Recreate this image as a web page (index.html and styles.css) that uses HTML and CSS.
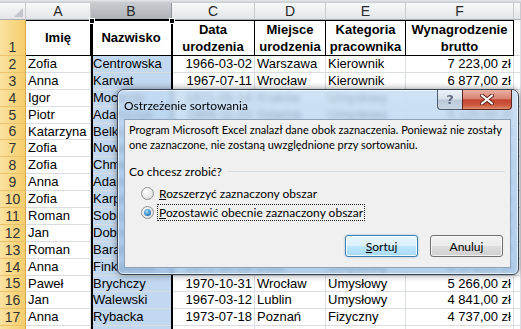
FILE: index.html
```html
<!DOCTYPE html>
<html lang="pl">
<head>
<meta charset="utf-8">
<title>Ostrzeżenie sortowania</title>
<link rel="stylesheet" href="styles.css">
</head>
<body>
<div class="screen">
  <div class="topstrip"></div>
  <div class="sheet">
    <div class="corner"><span class="tri"></span></div>
    <div class="colh">A</div><div class="colh sel">B</div><div class="colh">C</div><div class="colh">D</div><div class="colh">E</div><div class="colh">F</div><div class="colh"></div>

    <div class="rowh">1</div>
    <div class="c h1">Imię</div><div class="c h1 act">Nazwisko</div><div class="c h1">Data<br>urodzenia</div><div class="c h1">Miejsce<br>urodzenia</div><div class="c h1">Kategoria<br>pracownika</div><div class="c h1">Wynagrodzenie<br>brutto</div><div class="c"></div>

    <div class="rowh">2</div><div class="c">Zofia</div><div class="c b">Centrowska</div><div class="c r">1966-03-02</div><div class="c">Warszawa</div><div class="c">Kierownik</div><div class="c r">7 223,00 zł</div><div class="c"></div>
    <div class="rowh">3</div><div class="c">Anna</div><div class="c b">Karwat</div><div class="c r">1967-07-11</div><div class="c">Wrocław</div><div class="c">Kierownik</div><div class="c r">6 877,00 zł</div><div class="c"></div>
    <div class="rowh">4</div><div class="c">Igor</div><div class="c b">Mocarski</div><div class="c r">1971-05-14</div><div class="c">Kraków</div><div class="c">Umysłowy</div><div class="c r">5 412,00 zł</div><div class="c"></div>
    <div class="rowh">5</div><div class="c">Piotr</div><div class="c b">Adamczyk</div><div class="c r">1969-11-23</div><div class="c">Gdańsk</div><div class="c">Umysłowy</div><div class="c r">5 120,00 zł</div><div class="c"></div>
    <div class="rowh">6</div><div class="c">Katarzyna</div><div class="c b">Belkowska</div><div class="c r">1975-02-08</div><div class="c">Warszawa</div><div class="c">Umysłowy</div><div class="c r">4 980,00 zł</div><div class="c"></div>
    <div class="rowh">7</div><div class="c">Zofia</div><div class="c b">Nowak</div><div class="c r">1968-09-30</div><div class="c">Łódź</div><div class="c">Fizyczny</div><div class="c r">4 310,00 zł</div><div class="c"></div>
    <div class="rowh">8</div><div class="c">Zofia</div><div class="c b">Chmielewska</div><div class="c r">1972-04-17</div><div class="c">Poznań</div><div class="c">Umysłowy</div><div class="c r">4 655,00 zł</div><div class="c"></div>
    <div class="rowh">9</div><div class="c">Anna</div><div class="c b">Adamska</div><div class="c r">1970-12-01</div><div class="c">Wrocław</div><div class="c">Fizyczny</div><div class="c r">4 220,00 zł</div><div class="c"></div>
    <div class="rowh">10</div><div class="c">Zofia</div><div class="c b">Karpińska</div><div class="c r">1966-06-25</div><div class="c">Lublin</div><div class="c">Umysłowy</div><div class="c r">5 030,00 zł</div><div class="c"></div>
    <div class="rowh">11</div><div class="c">Roman</div><div class="c b">Sobczak</div><div class="c r">1964-08-19</div><div class="c">Kraków</div><div class="c">Fizyczny</div><div class="c r">4 105,00 zł</div><div class="c"></div>
    <div class="rowh">12</div><div class="c">Jan</div><div class="c b">Dobrowolski</div><div class="c r">1973-01-11</div><div class="c">Gdańsk</div><div class="c">Umysłowy</div><div class="c r">4 890,00 zł</div><div class="c"></div>
    <div class="rowh">13</div><div class="c">Roman</div><div class="c b">Barański</div><div class="c r">1969-03-05</div><div class="c">Warszawa</div><div class="c">Fizyczny</div><div class="c r">4 460,00 zł</div><div class="c"></div>
    <div class="rowh">14</div><div class="c">Anna</div><div class="c b">Finkowska</div><div class="c r">1971-10-28</div><div class="c">Łódź</div><div class="c">Umysłowy</div><div class="c r">4 575,00 zł</div><div class="c"></div>
    <div class="rowh">15</div><div class="c">Paweł</div><div class="c b">Brychczy</div><div class="c r">1970-10-31</div><div class="c">Wrocław</div><div class="c">Umysłowy</div><div class="c r">5 266,00 zł</div><div class="c"></div>
    <div class="rowh">16</div><div class="c">Jan</div><div class="c b">Walewski</div><div class="c r">1967-03-12</div><div class="c">Lublin</div><div class="c">Umysłowy</div><div class="c r">4 841,00 zł</div><div class="c"></div>
    <div class="rowh">17</div><div class="c">Anna</div><div class="c b">Rybacka</div><div class="c r">1973-07-18</div><div class="c">Poznań</div><div class="c">Fizyczny</div><div class="c r">4 737,00 zł</div><div class="c"></div>
    <div class="rowh">18</div><div class="c"></div><div class="c b"></div><div class="c"></div><div class="c"></div><div class="c"></div><div class="c"></div><div class="c"></div>
  </div>

  <div class="selection"></div>

  <div class="dialog">
    <div class="titlebar">
      <span class="title">Ostrzeżenie sortowania</span>
      <div class="ctrls">
        <span class="help">?</span>
        <span class="close">
          <svg width="14" height="11" viewBox="0 0 14 11"><path d="M2 1.5 L12 9.5 M12 1.5 L2 9.5" stroke="#5a2018" stroke-width="4" stroke-linecap="round"/><path d="M2 1.5 L12 9.5 M12 1.5 L2 9.5" stroke="#fff" stroke-width="2.2" stroke-linecap="round"/></svg>
        </span>
      </div>
    </div>
    <div class="client">
      <p class="msg">Program Microsoft Excel znalazł dane obok zaznaczenia. Ponieważ nie zostały<br>one zaznaczone, nie zostaną uwzględnione przy sortowaniu.</p>
      <div class="question">Co chcesz zrobić?</div>
      <div class="opt first"><span class="radio"></span><span class="lbl"><u>R</u>ozszerzyć zaznaczony obszar</span></div>
      <div class="opt"><span class="radio on"></span><span class="lbl focus"><u>P</u>ozostawić obecnie zaznaczony obszar</span></div>
      <div class="buttons">
        <span class="btn default"><u>S</u>ortuj</span>
        <span class="btn">Anuluj</span>
      </div>
    </div>
  </div>
</div>
</body>
</html>
```
FILE: styles.css
```css
html, body {
  margin: 0;
  padding: 0;
  background: #fff;
}
body {
  width: 521px;
  height: 329px;
  overflow: hidden;
  font-family: "Liberation Sans", Arial, sans-serif;
}
.screen {
  position: relative;
  width: 521px;
  height: 329px;
  overflow: hidden;
}
.topstrip {
  height: 3px;
  background: linear-gradient(#e6e8eb, #c3c8ce);
}
.sheet {
  display: grid;
  grid-template-columns: 26px 65px 81px 83px 71px 80px 108px 7px;
  grid-template-rows: 17px 36px;
  grid-auto-rows: 16.9px;
}
.corner, .colh {
  box-sizing: border-box;
  background: linear-gradient(#f8f9fa, #e2e4e7);
  border-right: 1px solid #c6c9ce;
  border-bottom: 1px solid #a9adb3;
}
.corner {
  position: relative;
}
.corner .tri {
  position: absolute;
  right: 2px;
  bottom: 2px;
  width: 0;
  height: 0;
  border-left: 9px solid transparent;
  border-bottom: 9px solid #c2c5c9;
}
.colh {
  display: flex;
  align-items: center;
  justify-content: center;
  font-size: 14px;
  color: #2a2a2a;
}
.colh.sel {
  background: linear-gradient(#c8cbcf, #aeb2b7);
  border-right-color: #8e9298;
}
.rowh {
  box-sizing: border-box;
  display: flex;
  align-items: flex-end;
  justify-content: center;
  font-size: 14px;
  line-height: 16px;
  color: #333;
  background: linear-gradient(90deg, #fae2a0, #f5cd6c);
  border-right: 1px solid #d6a64a;
  border-bottom: 1px solid #e9c26a;
}
.c {
  box-sizing: border-box;
  display: flex;
  align-items: center;
  padding: 0 2px;
  font-size: 13px;
  line-height: 16px;
  white-space: nowrap;
  overflow: hidden;
  color: #000;
  border-right: 1px solid #d9dce1;
  border-bottom: 1px solid #d9dce1;
}
.c.r {
  justify-content: flex-end;
}
.c.b {
  background: #c2d8f0;
}
.c.h1 {
  justify-content: center;
  text-align: center;
  font-weight: bold;
  line-height: 17px;
  border-right-color: #000;
  border-bottom-color: #000;
  box-shadow: inset 0 1px 0 #000;
  padding: 0 1px;
}
.selection {
  position: absolute;
  left: 91px;
  top: 19px;
  width: 82px;
  height: 320px;
  box-sizing: border-box;
  border: 2px solid #000;
  border-bottom: none;
}
.selection::before, .selection::after {
  content: "";
  position: absolute;
  top: -2px;
  width: 4px;
  height: 4px;
  background: #000;
  outline: 1px solid #fff;
}
.selection::before { left: -3px; }
.selection::after { right: -3px; }

/* dialog */
.dialog {
  position: absolute;
  left: 117px;
  top: 89px;
  width: 402px;
  height: 186px;
  box-sizing: border-box;
  border: 1px solid #38465a;
  border-radius: 7px 7px 6px 6px;
  background: linear-gradient(180deg, rgba(196, 220, 244, 0.8) 0%, rgba(171, 203, 235, 0.78) 40%, rgba(160, 194, 230, 0.8) 100%);
  backdrop-filter: blur(2.5px);
  box-shadow: 0 0 7px rgba(0, 0, 0, 0.45), inset 0 0 0 1px rgba(255, 255, 255, 0.65);
  padding: 0 7px 6px 6px;
  display: flex;
  flex-direction: column;
  font-family: Lato, "Noto Sans", sans-serif;
  font-size: 12px;
  color: #000;
}
.titlebar {
  height: 29px;
  display: flex;
  align-items: flex-start;
}
.title {
  align-self: center;
  font-size: 12px;
  margin-top: 1px;
}
.ctrls {
  margin-left: auto;
  margin-right: -1px;
  display: flex;
}
.help, .close {
  box-sizing: border-box;
  height: 20px;
  display: flex;
  align-items: center;
  justify-content: center;
  border: 1px solid #4d5a6c;
  border-top: none;
}
.help {
  width: 25px;
  border-right: none;
  border-radius: 0 0 0 4px;
  background: linear-gradient(#eef3f8 0%, #d6e0eb 48%, #b9c8d9 52%, #c9d6e4 100%);
  font-family: "DejaVu Sans", sans-serif;
  font-weight: bold;
  font-size: 13px;
  color: #5a6a80;
  text-shadow: 0 0 1px #fff;
}
.close {
  width: 50px;
  border-radius: 0 0 4px 0;
  border-color: #5e231a;
  background: linear-gradient(#eab0a3 0%, #d98473 45%, #c4452f 52%, #cd5a40 80%, #df8e6c 100%);
}
.close svg {
  display: block;
}
.client {
  flex: 1;
  background: #f0f0f0;
  border: 1px solid #8ea3ba;
  padding: 2px 3px 0 4px;
  display: flex;
  flex-direction: column;
}
.msg {
  margin: 0;
  font-size: 11px;
  line-height: 15px;
  white-space: nowrap;
}
.question {
  margin-top: 12px;
  line-height: 15px;
  display: flex;
  align-items: center;
}
.question::after {
  content: "";
  flex: 1;
  height: 1px;
  background: #d6dce3;
  margin-left: 6px;
  margin-right: 2px;
}
.opt {
  display: flex;
  align-items: center;
  line-height: 15px;
  margin-top: 2px;
  padding-left: 12px;
}
.opt.first {
  margin-top: 6px;
}
.radio {
  position: relative;
  width: 11px;
  height: 11px;
  border-radius: 50%;
  border: 1px solid #8e9195;
  background: radial-gradient(circle at 40% 35%, #ffffff, #e6e6e6 60%, #cfcfcf);
  margin-right: 3px;
  flex: none;
}
.radio.on::after {
  content: "";
  position: absolute;
  left: 2px;
  top: 2px;
  width: 7px;
  height: 7px;
  border-radius: 50%;
  background: radial-gradient(circle at 40% 35%, #a6dcf7, #3c8dc8 55%, #1b4f86);
}
.lbl {
  padding: 0 1px;
  border: 1px dotted transparent;
}
.lbl.focus {
  border-color: #222;
}
.buttons {
  margin-top: auto;
  margin-bottom: 10px;
  display: flex;
  justify-content: flex-end;
  gap: 12px;
  padding-right: 4px;
}
.btn {
  box-sizing: border-box;
  width: 73px;
  height: 22px;
  border-radius: 3px;
  border: 1px solid #707070;
  background: linear-gradient(#f3f3f3 0%, #ebebeb 48%, #dddddd 52%, #cfcfcf 100%);
  box-shadow: inset 0 0 0 1px rgba(255, 255, 255, 0.7);
  display: flex;
  align-items: center;
  justify-content: center;
  font-size: 12px;
}
.btn.default {
  border-color: #3c7fb1;
  background: linear-gradient(#eaf6fd 0%, #d9f0fc 48%, #bee6fd 52%, #a7d9f5 100%);
  box-shadow: inset 0 0 0 1px rgba(255, 255, 255, 0.8), 0 0 2px rgba(60, 140, 200, 0.6);
}
```
